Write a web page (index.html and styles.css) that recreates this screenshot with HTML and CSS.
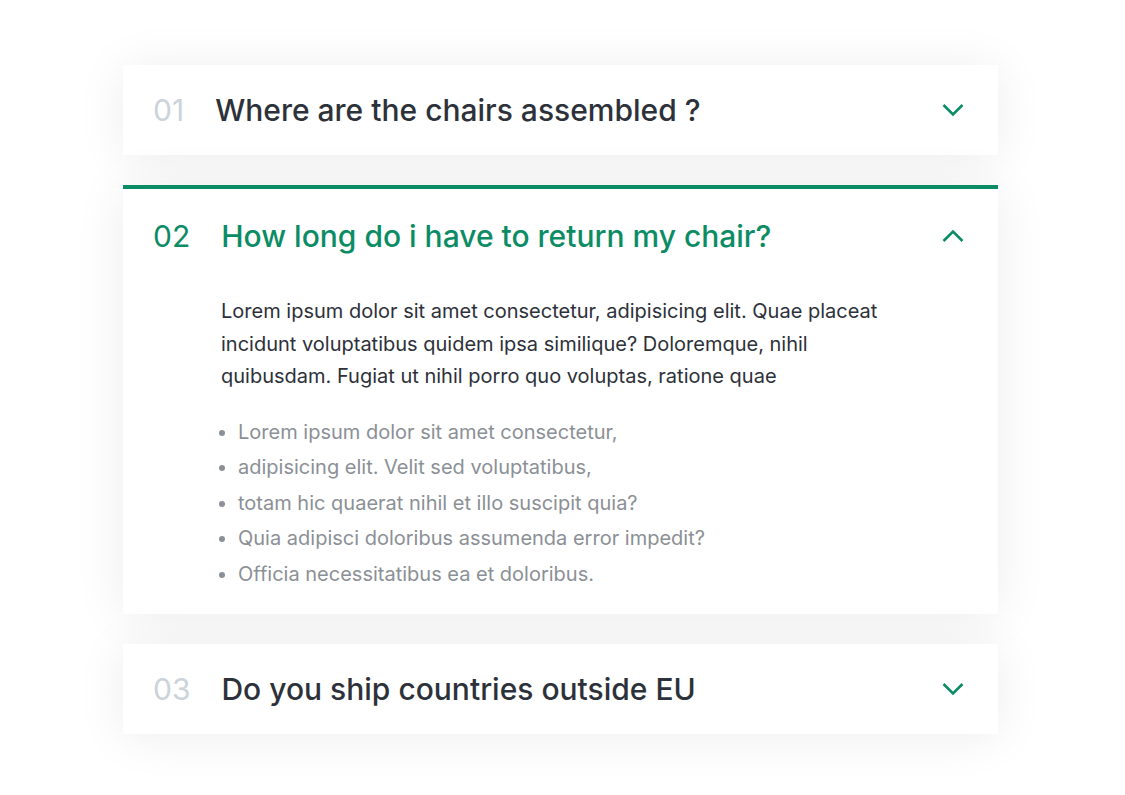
FILE: index.html
```html
<!DOCTYPE html>
<html lang="en">
<head>
<meta charset="utf-8">
<title>FAQ</title>
<link rel="stylesheet" href="styles.css">
</head>
<body>
<div class="faq">
  <div class="item">
    <div class="head">
      <span class="num">01</span>
      <span class="title">Where are the chairs assembled ?</span>
      <svg class="chev" width="24" height="14" viewBox="0 0 24 14"><polyline points="2.5 2 12 11.5 21.5 2"/></svg>
    </div>
  </div>
  <div class="item open">
    <div class="head">
      <span class="num">02</span>
      <span class="title">How long do i have to return my chair?</span>
      <svg class="chev" width="24" height="14" viewBox="0 0 24 14"><polyline points="2.5 12 12 2.5 21.5 12"/></svg>
    </div>
    <div class="body">
      <p>Lorem ipsum dolor sit amet consectetur, adipisicing elit. Quae placeat incidunt voluptatibus quidem ipsa similique? Doloremque, nihil quibusdam. Fugiat ut nihil porro quo voluptas, ratione quae</p>
      <ul>
        <li>Lorem ipsum dolor sit amet consectetur,</li>
        <li>adipisicing elit. Velit sed voluptatibus,</li>
        <li>totam hic quaerat nihil et illo suscipit quia?</li>
        <li>Quia adipisci doloribus assumenda error impedit?</li>
        <li>Officia necessitatibus ea et doloribus.</li>
      </ul>
    </div>
  </div>
  <div class="item">
    <div class="head">
      <span class="num">03</span>
      <span class="title">Do you ship countries outside EU</span>
      <svg class="chev" width="24" height="14" viewBox="0 0 24 14"><polyline points="2.5 2 12 11.5 21.5 2"/></svg>
    </div>
  </div>
</div>
</body>
</html>
```

FILE: styles.css
```css
html, body {
  margin: 0;
  padding: 0;
  background: #ffffff;
}

body {
  font-family: Inter, "Noto Sans", sans-serif;
  padding-bottom: 60px;
}

.faq {
  width: 875px;
  margin: 65px 0 0 123px;
  display: flex;
  flex-direction: column;
  gap: 30px;
}

.item {
  background: #ffffff;
  box-shadow: 0 3px 50px rgba(0, 0, 0, 0.075);
}

.item.open {
  border-top: 4px solid #0b8c65;
}

.head {
  height: 90px;
  display: flex;
  align-items: center;
  padding: 0 33px 0 30px;
  box-sizing: border-box;
}

.open .head {
  height: 92px;
  padding-top: 2px;
}

.num {
  font-size: 30px;
  color: #ccd3da;
  margin-right: 31px;
  font-weight: 400;
}

.title {
  flex: 1;
  font-size: 30px;
  color: #2d3139;
  font-weight: 500;
}

.open .num,
.open .title {
  color: #0b8c65;
}

.chev {
  fill: none;
  stroke: #0b8c65;
  stroke-width: 2.6;
}

.body {
  padding: 14px 30px 22px 98px;
}

.body p {
  margin: 0;
  max-width: 670px;
  font-size: 20px;
  line-height: 32.5px;
  color: #2d3139;
}

.body ul {
  margin: 22px 0 0;
  padding: 0 0 0 17px;
  color: #8b9096;
  font-size: 20px;
  line-height: 35.5px;
}
```
